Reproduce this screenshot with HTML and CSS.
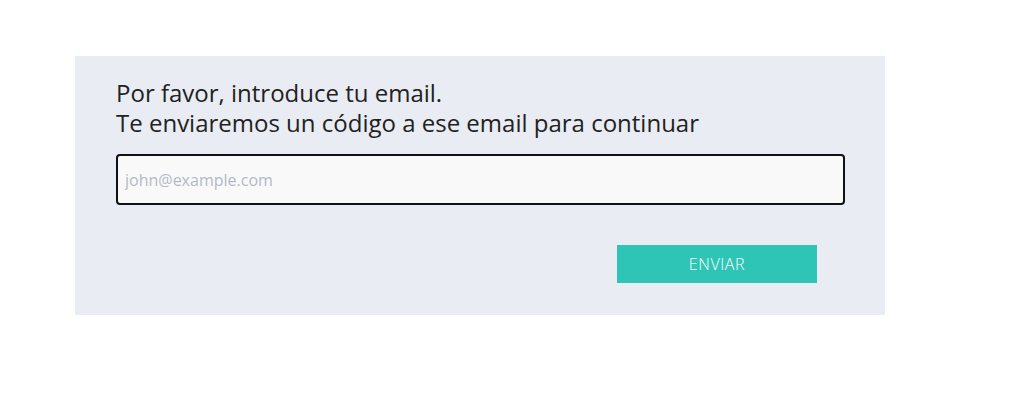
FILE: index.html
```html
<!DOCTYPE html>
<html lang="es">
<head>
<meta charset="utf-8">
<title>Email</title>
<link rel="stylesheet" href="styles.css">
</head>
<body>
<main class="page">
  <section class="card">
    <p class="intro">Por favor, introduce tu email.<br>Te enviaremos un código a ese email para continuar</p>
    <input class="email" type="email" placeholder="john@example.com" autofocus>
    <div class="actions">
      <button class="send" type="button">ENVIAR</button>
    </div>
  </section>
</main>
</body>
</html>
```

FILE: styles.css
```css
html, body {
  margin: 0;
  padding: 0;
  background: #ffffff;
}
body {
  font-family: "Open Sans", "Noto Sans", sans-serif;
  color: #222222;
}
.page {
  padding: 56px 0 0 75px;
}
.card {
  width: 810px;
  height: 259px;
  box-sizing: border-box;
  background: #e9ecf3;
  padding: 22px 40px 0 41px;
}
.intro {
  margin: 0;
  font-size: 24px;
  line-height: 30px;
  color: #222222;
}
.email {
  display: block;
  box-sizing: border-box;
  width: 729px;
  height: 51px;
  margin-top: 16px;
  border: 2px solid #111111;
  border-radius: 4px;
  background: #f9f9f9;
  padding: 0 7px;
  font-family: inherit;
  font-size: 16px;
  color: #222222;
  caret-color: #222222;
  outline: none;
}
.email::placeholder {
  color: #b3bac6;
}
.actions {
  display: flex;
  justify-content: flex-end;
  padding-right: 28px;
  margin-top: 40px;
}
.send {
  width: 200px;
  height: 38px;
  border: 0;
  border-radius: 0;
  background: #2ec5b6;
  color: #ffffff;
  font-family: inherit;
  font-size: 16px;
  font-weight: 300;
  letter-spacing: 0.6px;
  cursor: pointer;
}
```
